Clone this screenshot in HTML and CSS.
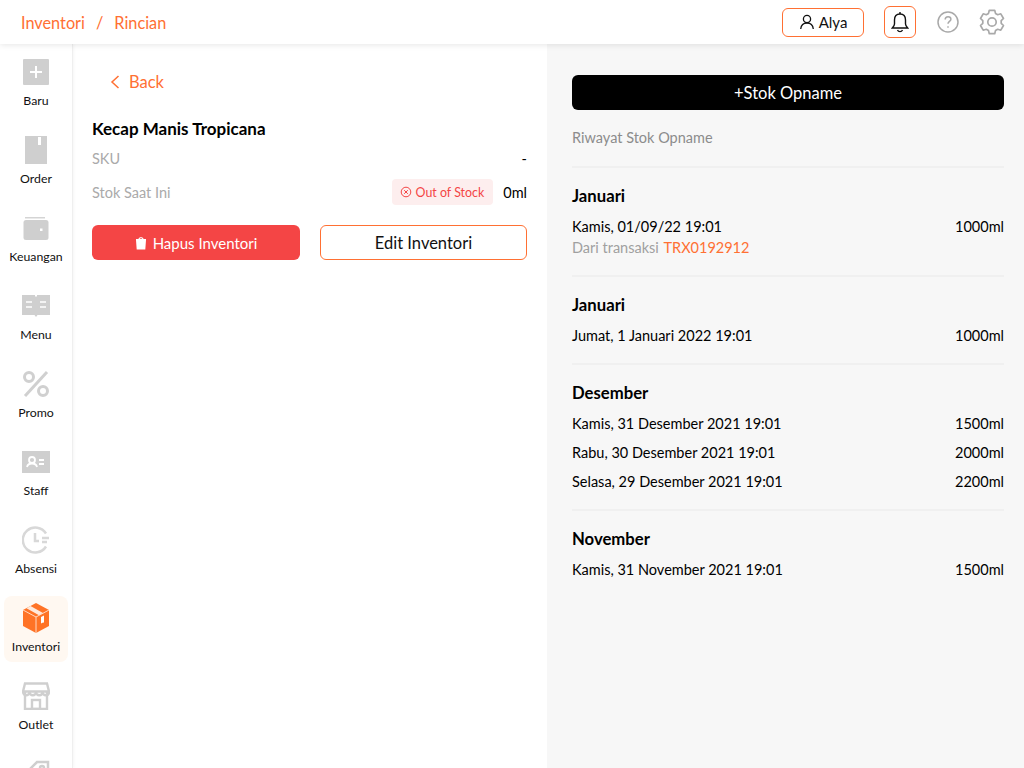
FILE: index.html
```html
<!DOCTYPE html>
<html lang="id">
<head>
<meta charset="utf-8">
<title>Rincian Inventori</title>
<link rel="stylesheet" href="styles.css">
</head>
<body>
<header class="topbar">
  <nav class="crumbs"><span>Inventori</span><span>/</span><span>Rincian</span></nav>
  <div class="top-actions">
    <button class="user-btn">
      <svg width="16" height="16" viewBox="0 0 16 16" fill="none" stroke="#111" stroke-width="1.3"><circle cx="8" cy="5" r="3.6"/><path d="M1.7 15c.4-3.700 2.900-6 6.300-6s5.900 2.300 6.300 6"/></svg>
      Alya
    </button>
    <button class="bell-btn">
      <svg width="18" height="22" viewBox="0 0 18 22" fill="none" stroke="#111" stroke-width="1.4"><path d="M9 3c-3.500 0-5.500 2.600-5.500 6v4c0 1.500-1 2.700-2.200 4h15.400c-1.200-1.300-2.200-2.500-2.200-4V9c0-3.400-2-6-5.500-6z"/><path d="M9 1v2M6.500 19c.5 1.100 1.400 1.600 2.500 1.600s2-.5 2.500-1.600"/></svg>
    </button>
    <svg class="help" width="24" height="24" viewBox="0 0 24 24" fill="none" stroke="#a9a9a9" stroke-width="1.5"><circle cx="12" cy="12" r="10"/><path d="M9.200 9.500c0-1.700 1.300-2.800 2.900-2.800s2.800 1.100 2.800 2.500c0 2.200-2.900 2.300-2.900 4.500"/><path d="M12 16.200v1.500"/></svg>
    <svg class="gear" width="26" height="26" viewBox="0 0 26 26" fill="none" stroke="#a9a9a9" stroke-width="1.700" stroke-linejoin="round"><circle cx="13" cy="13" r="4.200"/><path d="M10.300 1.300h5.400l.8 3.100 2.200 1.300 3.100-.9 2.700 4.700-2.300 2.200v2.600l2.300 2.200-2.700 4.700-3.100-.9-2.200 1.300-.8 3.100h-5.400l-.8-3.100-2.200-1.300-3.100.9-2.700-4.700 2.300-2.200v-2.600L1.500 9.500l2.700-4.700 3.100.9 2.200-1.300z"/></svg>
  </div>
</header>
<div class="shell">
  <aside class="sidebar">
    <a class="nav-item"><span class="nav-icon"><svg width="28" height="28" viewBox="0 0 28 28"><rect x="1" y="1" width="26" height="26" rx="1" fill="#cfcfcf"/><path d="M14 8v12M8 14h12" stroke="#fff" stroke-width="2"/></svg></span>Baru</a>
    <a class="nav-item"><span class="nav-icon"><svg width="24" height="28" viewBox="0 0 24 28"><rect x="1" y="0" width="22" height="28" fill="#cfcfcf"/><rect x="14" y="1" width="3" height="8" fill="#fff"/></svg></span>Order</a>
    <a class="nav-item"><span class="nav-icon"><svg width="28" height="28" viewBox="0 0 28 28"><path d="M3 3h20v1.500H3z" fill="#d4d4d4"/><rect x="1.500" y="6" width="25" height="20" rx="2.500" fill="#cfcfcf"/><rect x="18" y="14.500" width="2.500" height="2.500" fill="#fff"/></svg></span>Keuangan</a>
    <a class="nav-item"><span class="nav-icon"><svg width="28" height="24" viewBox="0 0 28 24"><path d="M0 1h13v1.500h2V1h13v20H15.500L14 23l-1.500-2H0z" fill="#cfcfcf"/><path d="M4 8h6M4 13h6M18 8h6M18 13h6" stroke="#fff" stroke-width="1.500"/></svg></span>Menu</a>
    <a class="nav-item"><span class="nav-icon"><svg width="28" height="28" viewBox="0 0 28 28" fill="none" stroke="#d0d0d0" stroke-width="3"><circle cx="7" cy="7" r="4.500"/><circle cx="21" cy="21" r="4.500"/><path d="M25 2 3 26"/></svg></span>Promo</a>
    <a class="nav-item"><span class="nav-icon"><svg width="28" height="22" viewBox="0 0 28 22"><rect width="28" height="22" fill="#cfcfcf"/><circle cx="10" cy="9" r="3" fill="none" stroke="#fff" stroke-width="1.800"/><path d="M5 16c.6-2.500 2.500-3.500 5-3.500s4.400 1 5 3.500" fill="none" stroke="#fff" stroke-width="1.800"/><path d="M17 9h5M17 13h5" stroke="#fff" stroke-width="1.800"/></svg></span>Staff</a>
    <a class="nav-item"><span class="nav-icon"><svg width="28" height="28" viewBox="0 0 28 28" fill="none" stroke="#d8d8d8" stroke-width="2.500"><path d="M24 7.500A12.500 12.500 0 1 0 24 20.500"/><path d="M13 7v8h4M20 12h7M20 16h5"/></svg></span>Absensi</a>
    <a class="nav-item active"><span class="nav-icon"><svg width="28" height="30" viewBox="0 0 28 30"><path d="M14 0 27 7v16l-13 7-13-7V7z" fill="#ff7326"/><path d="M1 7l13 7 13-7M14 14v16" fill="none" stroke="#ffd9c2" stroke-width="1"/><path d="M8.500 3 21 10 17 12.200 4.500 5.200z" fill="#ffe9dc"/><path d="M19 14v6.500l1.500-.8 1.500-.3V12.500z" fill="#fff"/></svg></span>Inventori</a>
    <a class="nav-item"><span class="nav-icon"><svg width="28" height="28" viewBox="0 0 28 28" fill="none" stroke="#cfcfcf" stroke-width="2.400"><path d="M3 1.500h22l2 8H1zM3 10v17h22V10"/><path d="M1 9.500c0 5 6.500 5 6.500 0 0 5 6.500 5 6.500 0 0 5 6.500 5 6.500 0 0 5 6.500 5 6.500 0"/><rect x="10" y="18" width="8" height="9"/></svg></span>Outlet</a>
    <a class="nav-item"><span class="nav-icon"><svg width="28" height="28" viewBox="0 0 28 28" fill="none" stroke="#cfcfcf" stroke-width="2.500"><path d="M2 15 15 2h11v11L13 26z"/><circle cx="20" cy="8" r="2"/></svg></span></a>
  </aside>
  <main class="detail">
    <a class="back"><svg width="10" height="14" viewBox="0 0 10 14" fill="none" stroke="#ff7033" stroke-width="1.500"><path d="M8.500 1 2 7l6.500 6"/></svg>Back</a>
    <h1>Kecap Manis Tropicana</h1>
    <div class="info-row"><span>SKU</span><span class="dark">-</span></div>
    <div class="info-row stock">
      <span>Stok Saat Ini</span>
      <span class="stock-val">
        <span class="badge"><svg width="12" height="12" viewBox="0 0 12 12" fill="none" stroke="#f44545" stroke-width="1"><circle cx="6" cy="6" r="4.800"/><path d="m4.200 4.200 3.600 3.600M7.800 4.200 4.200 7.800"/></svg>Out of Stock</span>
        <span class="dark">0ml</span>
      </span>
    </div>
    <div class="actions">
      <button class="btn danger"><svg width="12" height="14" viewBox="0 0 12 14" fill="#fff"><path d="M1 3h10v1l-.7 9.500H1.700L1 4zM3.500 3c0-2.500 5-2.500 5 0H7.300c0-1-2.600-1-2.600 0z"/></svg>Hapus Inventori</button>
      <button class="btn outline">Edit Inventori</button>
    </div>
  </main>
  <section class="history">
    <button class="opname">+Stok Opname</button>
    <p class="hist-title">Riwayat Stok Opname</p>
    <div class="group">
      <h2>Januari</h2>
      <div class="line"><span>Kamis, 01/09/22 19:01</span><span>1000ml</span></div>
      <div class="source">Dari transaksi <span>TRX0192912</span></div>
    </div>
    <div class="group">
      <h2>Januari</h2>
      <div class="line"><span>Jumat, 1 Januari 2022 19:01</span><span>1000ml</span></div>
    </div>
    <div class="group">
      <h2>Desember</h2>
      <div class="line"><span>Kamis, 31 Desember 2021 19:01</span><span>1500ml</span></div>
      <div class="line"><span>Rabu, 30 Desember 2021 19:01</span><span>2000ml</span></div>
      <div class="line"><span>Selasa, 29 Desember 2021 19:01</span><span>2200ml</span></div>
    </div>
    <div class="group">
      <h2>November</h2>
      <div class="line"><span>Kamis, 31 November 2021 19:01</span><span>1500ml</span></div>
    </div>
  </section>
</div>
</body>
</html>
```
FILE: styles.css
```css
* { box-sizing: border-box; }
html, body { margin: 0; height: 100%; overflow: hidden; }
body { font-family: Lato, "Noto Sans", sans-serif; color: #000; background: #fff; font-size: 15px; }
button { font-family: inherit; cursor: pointer; }

.topbar { height: 44px; display: flex; align-items: center; justify-content: space-between; padding: 0 19px 0 21px; background: #fff; box-shadow: 0 1px 6px rgba(0,0,0,.1); position: relative; z-index: 2; }
.crumbs { display: flex; gap: 11px; color: #ff7033; font-size: 16.300px; }
.top-actions { display: flex; align-items: center; }
.user-btn { width: 82px; height: 29px; display: flex; align-items: center; justify-content: center; gap: 4px; background: #fff; border: 1px solid #ff7033; border-radius: 6px; font-size: 15px; color: #111; padding: 0; }
.bell-btn { width: 32px; height: 32px; margin-left: 20px; display: flex; align-items: center; justify-content: center; background: #fff; border: 1px solid #ff7033; border-radius: 6px; padding: 0; }
.help { margin-left: 20px; }
.gear { margin-left: 19px; }

.shell { display: flex; height: 724px; }
.sidebar { width: 73px; flex: none; height: 724px; overflow: hidden; border-right: 1px solid #efefef; box-shadow: 1px 0 3px rgba(0,0,0,.04); padding-top: 6px; display: flex; flex-direction: column; align-items: center; gap: 12px; }
.nav-item { width: 64px; height: 66px; flex: none; display: flex; flex-direction: column; align-items: center; font-size: 12.300px; color: #111; border-radius: 8px; padding-top: 6px; }
.nav-icon { height: 32px; margin-bottom: 5px; display: flex; align-items: center; justify-content: center; }
.nav-item.active { background: #fff8f1; }

.detail { width: 474px; flex: none; padding: 28px 20px 0 19px; }
.back { display: flex; align-items: center; gap: 9px; margin-left: 18px; color: #ff7033; font-size: 16.500px; height: 20px; }
h1 { margin: 27px 0 0; font-size: 17px; font-weight: 700; line-height: 20px; }
.info-row { display: flex; justify-content: space-between; align-items: center; color: #aaa; font-size: 14.500px; margin-top: 9px; height: 20px; }
.info-row.stock { margin-top: 12px; height: 24px; }
.dark { color: #000; }
.stock-val { display: flex; align-items: center; gap: 10px; }
.badge { display: flex; align-items: center; gap: 4px; height: 26px; padding: 0 9px 0 8px; background: #fdeeee; color: #f44545; font-size: 12.400px; border-radius: 4px; }
.actions { display: flex; justify-content: space-between; margin-top: 21px; }
.btn { height: 35px; border-radius: 6px; display: flex; align-items: center; justify-content: center; gap: 6px; padding: 0; }
.danger { width: 208px; font-size: 15px; background: #f44545; border: 0; color: #fff; }
.outline { width: 207px; font-size: 16.500px; background: #fff; border: 1px solid #ff7033; color: #111; }

.history { flex: 1; background: #f7f7f7; padding: 31px 20px 0 25px; }
.opname { display: block; width: 100%; height: 35px; background: #000; color: #fff; border: 0; border-radius: 6px; font-size: 16.500px; }
.hist-title { margin: 0; padding: 18px 0; color: #8c8c8c; font-size: 14.500px; line-height: 20px; }
.group { border-top: 2px solid #f0f0f0; padding: 18px 0 17px; }
h2 { margin: 0 0 10px; font-size: 16.700px; font-weight: 700; line-height: 20px; }
.line { display: flex; justify-content: space-between; font-size: 14.500px; line-height: 21px; }
.line + .line { margin-top: 8px; }
.source { font-size: 14.500px; line-height: 21px; color: #a0a0a0; }
.source span { color: #ff7033; margin-left: 1px; }
```
